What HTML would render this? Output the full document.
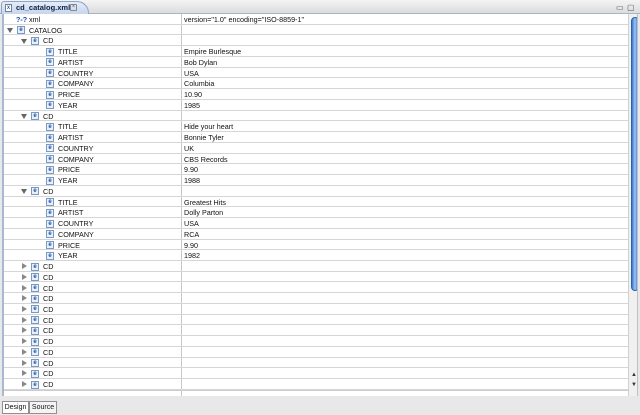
<!DOCTYPE html>
<html><head><meta charset="utf-8"><style>
*{margin:0;padding:0;box-sizing:border-box}
body{width:640px;height:415px;overflow:hidden;background:#e8e8e8;font-family:"Liberation Sans",sans-serif;font-size:7.2px;color:#111;position:relative}
.tabbar{position:absolute;left:0;top:0;width:640px;height:14px;background:linear-gradient(#f4f4f4,#dcdcdc);border-bottom:1px solid #a8b4c8}
.tab{position:absolute;left:1px;top:1px;width:88px;height:13px;background:linear-gradient(#e4ecf8,#c6d6ee);border:1px solid #8ea4c8;border-bottom:none;border-radius:3px 12px 0 0;font-size:7.5px;font-weight:bold;color:#102040;padding-left:14px;line-height:12px;white-space:nowrap}
.tab i{position:absolute;left:3px;top:2px;width:7px;height:8px;border:1px solid #7080a0;background:#fff;font-style:normal;font-size:6px;line-height:6px;text-align:center;font-weight:normal}
.tab b{position:absolute;left:68px;top:2px;width:7px;height:7px;border:1px solid #888;border-radius:1px;font-size:6px;line-height:5px;text-align:center;color:#666;font-weight:normal}
.mm{position:absolute;top:3px;font-size:8px;color:#555}
.area{position:absolute;left:2px;top:14px;width:636px;height:382px;background:#fff;border-left:2px solid #a8b8d0;border-right:1px solid #c0c0c0;overflow:hidden}
.r{position:absolute;left:0;width:624px;height:10.74px;border-bottom:1px solid #d6d6d6;line-height:12px;white-space:nowrap}
.r span{position:absolute;top:0}
.v{left:180px}
.col{position:absolute;left:177px;top:0;width:1px;height:383px;background:#c8c8c8}
.e{position:absolute;top:1.5px;width:8px;height:8px;border:1px solid #7a9ac4;background:#e8f0fb;font-size:6px;line-height:6px;text-align:center;color:#2050a0;font-weight:bold;font-style:normal}
.td{position:absolute;top:3.5px;width:0;height:0;border-left:3.5px solid transparent;border-right:3.5px solid transparent;border-top:5px solid #666}
.tr{position:absolute;top:2px;width:0;height:0;border-top:3.5px solid transparent;border-bottom:3.5px solid transparent;border-left:5px solid #888}
.sb{position:absolute;left:624px;top:0;width:12px;height:383px;background:#f0f0f0;border-left:1px solid #d0d0d0}
.th{position:absolute;left:2px;top:3px;width:8px;height:274px;border-radius:4px;background:linear-gradient(90deg,#3a78d0,#9cc4f4 50%,#3a78d0);border:1px solid #3060a8}
.ar{position:absolute;left:2px;font-size:6px;color:#333}
.bt{position:absolute;top:401px;height:13px;border:1px solid #909090;background:#f4f4f4;font-size:7px;line-height:11px;padding:0 1px;white-space:nowrap;text-align:center}
</style></head><body>
<div class="tabbar"><div class="tab"><i>x</i>cd_catalog.xml<b>×</b></div><span class="mm" style="left:616px">▭</span><span class="mm" style="left:627px">▢</span></div>
<div class="area">
<div class="col"></div>
<div class="r" style="top:0px"><span style="left:12px;color:#2050a0;font-weight:bold">?-?</span><span style="left:25px">xml</span><span class="v">version="1.0" encoding="ISO-8859-1"</span></div>
<div class="r" style="top:10.74px"><i class="td" style="left:3px"></i><i class="e" style="left:13px">e</i><span style="left:25px">CATALOG</span></div>
<div class="r" style="top:21.48px"><i class="td" style="left:17px"></i><i class="e" style="left:27px">e</i><span style="left:39px">CD</span></div>
<div class="r" style="top:32.22px"><i class="e" style="left:42px">e</i><span style="left:54px">TITLE</span><span class="v">Empire Burlesque</span></div>
<div class="r" style="top:42.96px"><i class="e" style="left:42px">e</i><span style="left:54px">ARTIST</span><span class="v">Bob Dylan</span></div>
<div class="r" style="top:53.7px"><i class="e" style="left:42px">e</i><span style="left:54px">COUNTRY</span><span class="v">USA</span></div>
<div class="r" style="top:64.44px"><i class="e" style="left:42px">e</i><span style="left:54px">COMPANY</span><span class="v">Columbia</span></div>
<div class="r" style="top:75.18px"><i class="e" style="left:42px">e</i><span style="left:54px">PRICE</span><span class="v">10.90</span></div>
<div class="r" style="top:85.92px"><i class="e" style="left:42px">e</i><span style="left:54px">YEAR</span><span class="v">1985</span></div>
<div class="r" style="top:96.66px"><i class="td" style="left:17px"></i><i class="e" style="left:27px">e</i><span style="left:39px">CD</span></div>
<div class="r" style="top:107.4px"><i class="e" style="left:42px">e</i><span style="left:54px">TITLE</span><span class="v">Hide your heart</span></div>
<div class="r" style="top:118.14px"><i class="e" style="left:42px">e</i><span style="left:54px">ARTIST</span><span class="v">Bonnie Tyler</span></div>
<div class="r" style="top:128.88px"><i class="e" style="left:42px">e</i><span style="left:54px">COUNTRY</span><span class="v">UK</span></div>
<div class="r" style="top:139.62px"><i class="e" style="left:42px">e</i><span style="left:54px">COMPANY</span><span class="v">CBS Records</span></div>
<div class="r" style="top:150.36px"><i class="e" style="left:42px">e</i><span style="left:54px">PRICE</span><span class="v">9.90</span></div>
<div class="r" style="top:161.1px"><i class="e" style="left:42px">e</i><span style="left:54px">YEAR</span><span class="v">1988</span></div>
<div class="r" style="top:171.84px"><i class="td" style="left:17px"></i><i class="e" style="left:27px">e</i><span style="left:39px">CD</span></div>
<div class="r" style="top:182.58px"><i class="e" style="left:42px">e</i><span style="left:54px">TITLE</span><span class="v">Greatest Hits</span></div>
<div class="r" style="top:193.32px"><i class="e" style="left:42px">e</i><span style="left:54px">ARTIST</span><span class="v">Dolly Parton</span></div>
<div class="r" style="top:204.06px"><i class="e" style="left:42px">e</i><span style="left:54px">COUNTRY</span><span class="v">USA</span></div>
<div class="r" style="top:214.8px"><i class="e" style="left:42px">e</i><span style="left:54px">COMPANY</span><span class="v">RCA</span></div>
<div class="r" style="top:225.54px"><i class="e" style="left:42px">e</i><span style="left:54px">PRICE</span><span class="v">9.90</span></div>
<div class="r" style="top:236.28px"><i class="e" style="left:42px">e</i><span style="left:54px">YEAR</span><span class="v">1982</span></div>
<div class="r" style="top:247.02px"><i class="tr" style="left:18px"></i><i class="e" style="left:27px">e</i><span style="left:39px">CD</span></div>
<div class="r" style="top:257.76px"><i class="tr" style="left:18px"></i><i class="e" style="left:27px">e</i><span style="left:39px">CD</span></div>
<div class="r" style="top:268.5px"><i class="tr" style="left:18px"></i><i class="e" style="left:27px">e</i><span style="left:39px">CD</span></div>
<div class="r" style="top:279.24px"><i class="tr" style="left:18px"></i><i class="e" style="left:27px">e</i><span style="left:39px">CD</span></div>
<div class="r" style="top:289.98px"><i class="tr" style="left:18px"></i><i class="e" style="left:27px">e</i><span style="left:39px">CD</span></div>
<div class="r" style="top:300.72px"><i class="tr" style="left:18px"></i><i class="e" style="left:27px">e</i><span style="left:39px">CD</span></div>
<div class="r" style="top:311.46px"><i class="tr" style="left:18px"></i><i class="e" style="left:27px">e</i><span style="left:39px">CD</span></div>
<div class="r" style="top:322.2px"><i class="tr" style="left:18px"></i><i class="e" style="left:27px">e</i><span style="left:39px">CD</span></div>
<div class="r" style="top:332.94px"><i class="tr" style="left:18px"></i><i class="e" style="left:27px">e</i><span style="left:39px">CD</span></div>
<div class="r" style="top:343.68px"><i class="tr" style="left:18px"></i><i class="e" style="left:27px">e</i><span style="left:39px">CD</span></div>
<div class="r" style="top:354.42px"><i class="tr" style="left:18px"></i><i class="e" style="left:27px">e</i><span style="left:39px">CD</span></div>
<div class="r" style="top:365.16px"><i class="tr" style="left:18px"></i><i class="e" style="left:27px">e</i><span style="left:39px">CD</span></div>
<div class="r" style="top:375.9px;border-top:1px solid #ccc"></div>
<div class="sb"><div class="th"></div><span class="ar" style="top:358px">▲</span><span class="ar" style="top:368px">▼</span></div>
</div>
<div class="bt" style="left:2px;width:27px;background:#fff">Design</div>
<div class="bt" style="left:29px;width:28px">Source</div>
</body></html>
